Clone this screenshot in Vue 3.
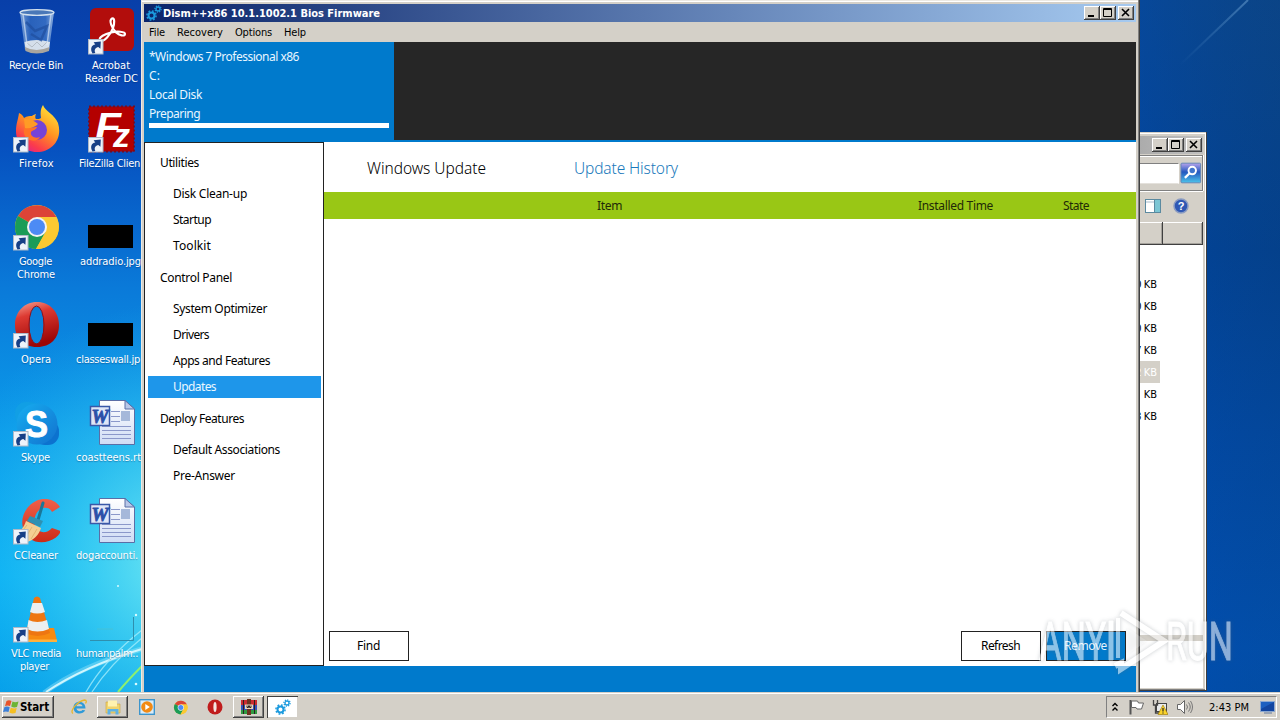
<script setup>
const vFit = {
  mounted(el, { value }) {
    if (!value) return
    const natural = el.getBoundingClientRect().width
    el.style.letterSpacing = (value - natural) / el.textContent.length + 'px'
  },
}

// Label lines: [text, width, left]
const shortcuts = [
  { icon: 'bin', lines: [['Recycle Bin', 54, 9]] },
  { icon: 'acrobat', link: true, lines: [['Acrobat', 38, 18], ['Reader DC', 53, 11]] },
  { icon: 'firefox', link: true, lines: [['Firefox', 35, 19]] },
  { icon: 'filezilla', link: true, lines: [['FileZilla Clien', 61, 5]] },
  { icon: 'chrome', link: true, lines: [['Google', 33, 19], ['Chrome', 38, 17]] },
  { icon: 'thumb', lines: [['addradio.jpg', 61, 6]] },
  { icon: 'opera', link: true, lines: [['Opera', 30, 21]] },
  { icon: 'thumb', lines: [['classeswall.jp', 64, 2]] },
  { icon: 'skype', link: true, lines: [['Skype', 29, 21]] },
  { icon: 'word', lines: [['coastteens.rt', 65, 2]] },
  { icon: 'ccleaner', link: true, lines: [['CCleaner', 44, 14]] },
  { icon: 'word', lines: [['dogaccounti.', 62, 2]] },
  { icon: 'vlc', link: true, lines: [['VLC media', 50, 11], ['player', 29, 20]] },
  { icon: 'glass', lines: [['humanpalm..', 62, 2]] },
]

const menu = [['File', 16, 12], ['Recovery', 46, 8], ['Options', 37, 3], ['Help', 22, 0]]

const info = [['*Windows 7 Professional x86', 150], ['C:', 11], ['Local Disk', 53], ['Preparing', 51]]

const nav = [
  { title: ['Utilities', 39], items: [['Disk Clean-up', 74], ['Startup', 38], ['Toolkit', 38]] },
  {
    title: ['Control Panel', 72],
    items: [['System Optimizer', 94], ['Drivers', 36], ['Apps and Features', 97], ['Updates', 43]],
  },
  { title: ['Deploy Features', 84], items: [['Default Associations', 107], ['Pre-Answer', 62]] },
]

const sizes = ['0 KB', '0 KB', '0 KB', '7 KB', '2 KB', 'KB', '3 KB']
</script>

<template>
  <div class="desktop">
    <svg class="defs" width="0" height="0">
      <defs>
        <linearGradient id="gFox" x1=".8" y1="0" x2=".2" y2="1">
          <stop offset="0" stop-color="#ffe83a" /><stop offset=".45" stop-color="#ff9422" />
          <stop offset=".8" stop-color="#fb3b4c" /><stop offset="1" stop-color="#e0218a" />
        </linearGradient>
        <linearGradient id="gOp" x1="0" y1="0" x2=".3" y2="1">
          <stop offset="0" stop-color="#f8a898" /><stop offset=".35" stop-color="#dd3a32" /><stop offset="1" stop-color="#9c0606" />
        </linearGradient>
        <linearGradient id="gSky" x1="0" y1="0" x2="1" y2="1">
          <stop offset="0" stop-color="#16aef0" /><stop offset="1" stop-color="#1272cf" />
        </linearGradient>
        <linearGradient id="gDoc" x1="0" y1="0" x2="0" y2="1">
          <stop offset="0" stop-color="#fff" /><stop offset="1" stop-color="#cfdcf5" />
        </linearGradient>
        <linearGradient id="gBin" x1="0" y1="0" x2="1" y2="0">
          <stop offset="0" stop-color="#a9c6e8" stop-opacity=".75" /><stop offset=".3" stop-color="#3f76c4" stop-opacity=".6" />
          <stop offset=".75" stop-color="#4f86d0" stop-opacity=".6" /><stop offset="1" stop-color="#bcd4ee" stop-opacity=".8" />
        </linearGradient>
        <linearGradient id="gCc" x1="0" y1="0" x2="0" y2="1">
          <stop offset="0" stop-color="#f0604a" /><stop offset="1" stop-color="#cc2a16" />
        </linearGradient>
      </defs>

      <symbol id="link" viewBox="0 0 16 16">
        <rect x=".5" y=".5" width="14.5" height="14.5" fill="#eef3fa" stroke="#aeb9c8" />
        <path d="M4.500 14.500C1.800 9.500 3.500 6 7.300 5.400L5.600 3.300 12.800 2.600 12.400 9.800 10.300 7.900C7.600 8.600 5.800 10.500 7.300 14Z" fill="#173f86" />
      </symbol>

      <symbol id="bin" viewBox="0 0 48 48">
        <path d="M8 5L13 43Q24 49 37 43L42 5Z" fill="url(#gBin)" />
        <path d="M12.500 35Q24 31 38 35L37 42Q24 48 13.500 42Z" fill="#e8ecef" opacity=".9" />
        <path d="M13 40Q24 46 37.500 40L37 44Q24 49 13.500 44Z" fill="#a9a59e" />
        <path d="M15 36l5 4 5-5 5 5 5-5" fill="none" stroke="#b5bdc6" />
        <path d="M14 15l9 9 12-5-6 14-10-6" fill="none" stroke="#1f4f9e" stroke-width="2.500" opacity=".7" />
        <path d="M11 7l4 31M39 7l-4 31" stroke="#e4eefa" stroke-width="1.500" opacity=".6" />
        <ellipse cx="25" cy="5.500" rx="17" ry="2.800" fill="#4a78b8" stroke="#d4e1ee" stroke-width="1.300" />
      </symbol>

      <symbol id="acrobat" viewBox="0 0 48 48">
        <rect x="3" y="1" width="44" height="43" rx="6" fill="#b20d0c" />
        <path d="M13 33c-1.500-3 5-6 11-7.500 6-1.500 14-1 14 1.500 0 3-6 1-9-1.500-4-4-7.500-12-4-14 3-1 2.500 5 1 9.500-2 6-9.500 15.500-13 12z" fill="none" stroke="#fff" stroke-width="2.200" />
      </symbol>

      <symbol id="firefox" viewBox="0 0 48 48">
        <path d="M4 26C4 19 6 15 7 8c3 1 4 3 5 5 3-2 6-2 8-2 1-1 3-2 4-2-1 2-1 4 0 5 2 0 4 0 5-1-1-6 0-10 2-13 2 6 12 10 15 18C51 34 40 47 25 47 12 47 4 38 4 26z" fill="url(#gFox)" />
        <circle cx="25" cy="25" r="10" fill="#7543d8" />
        <path d="M14 20c3 4 8 2 11 2-1 3-4 3-6 5-1 4 4 7 9 5-2 5-12 5-15-1-2-4-1-8 1-11z" fill="#ff7326" />
        <path d="M12 14c6-1 10 2 14 5-3 3-8 5-13 4z" fill="#ff9b25" />
      </symbol>

      <symbol id="filezilla" viewBox="0 0 48 48">
        <rect x="2" y="1.500" width="45" height="45" fill="#b40000" />
        <rect x="2" y="1.500" width="45" height="45" fill="none" stroke="#780c20" stroke-width="2" stroke-dasharray="2 2" />
        <g font-family="Liberation Sans, sans-serif" font-weight="bold" font-style="italic" fill="#fff">
          <text x="8" y="35" font-size="38" textLength="26" lengthAdjust="spacingAndGlyphs">F</text>
          <text x="26" y="42" font-size="34">z</text>
        </g>
      </symbol>

      <symbol id="chrome" viewBox="0 0 48 48">
        <circle cx="25" cy="24" r="22" fill="#fbc932" />
        <path d="M25 24L6 13A22 22 0 0 1 44.300 14H25z" fill="#dc4437" />
        <path d="M25 24L6 13A22 22 0 0 0 24 46L33.500 29z" fill="#1a9c58" />
        <path d="M25 14H44.300A22 22 0 0 1 24 46L33.700 29z" fill="#fbc932" />
        <circle cx="25" cy="24" r="10" fill="#f3f3f3" /><circle cx="25" cy="24" r="8" fill="#4c8bf5" />
      </symbol>

      <symbol id="opera" viewBox="0 0 48 48">
        <path fill-rule="evenodd" d="M25 1C12 1 3 11 3 24s8 22 22 22 22-9 22-22S38 1 25 1zM24.500 5.500c5 0 7 7 7 18s-2 19-7 19-7-8-7-19 2-18 7-18z" fill="url(#gOp)" />
        <ellipse cx="24.500" cy="24" rx="7.500" ry="19" fill="none" stroke="#8e1019" />
      </symbol>

      <symbol id="skype" viewBox="0 0 48 48">
        <rect x="3" y="3" width="25" height="25" rx="11" fill="#119fe5" /><rect x="22" y="21" width="25" height="25" rx="11" fill="#0c72cf" />
        <circle cx="25" cy="25" r="20.500" fill="url(#gSky)" />
        <text x="13" y="38" font-family="Liberation Sans, sans-serif" font-weight="bold" font-size="37" fill="#fff" stroke="#fff" textLength="23" lengthAdjust="spacingAndGlyphs">S</text>
      </symbol>

      <symbol id="thumb" viewBox="0 0 48 48">
        <rect x="1" y="22" width="45" height="23" fill="#000" />
      </symbol>

      <symbol id="glass" viewBox="0 0 48 48">
        <path d="M3 45.500H46.500V22" fill="none" stroke="#2f8fae" />
        <path d="M10 34h16" stroke="#4fc0cc" opacity=".7" />
      </symbol>

      <symbol id="word" viewBox="0 0 48 48">
        <path d="M12.500 1.500H38L47.500 10V45.500H12.500z" fill="url(#gDoc)" stroke="#5a6ea6" />
        <path d="M38 1.500V10H47.500z" fill="#b9c8e8" stroke="#5a6ea6" />
        <path d="M24 12.500h9M24 17.500h9M24 22.500h9M15 27.500h29M15 31.500h29M15 35.500h29M15 39.500h29" stroke="#8b98ca" />
        <rect x="34" y="12" width="9" height="10" fill="#a5b8da" />
        <rect x="3.500" y="7.500" width="19" height="19" fill="#dfe6f7" stroke="#3a58a8" stroke-width="1.500" />
        <text x="4.500" y="23.500" font-family="Liberation Serif, serif" font-weight="bold" font-style="italic" font-size="18" fill="#2b50a8" stroke="#2b50a8" stroke-width=".8" textLength="17" lengthAdjust="spacingAndGlyphs">W</text>
      </symbol>

      <symbol id="ccleaner" viewBox="0 0 48 48">
        <path d="M48 10C43 2 32 0 24 4 14 9 8 20 11 31c3 12 15 17 26 13 6-2 10-5 12-10l-9-3c-5 6-13 5-16 0-4-8 0-18 7-20 4-1 7 0 9 4z" fill="url(#gCc)" />
        <path d="M31 6l-5 17" stroke="#1a7798" stroke-width="3" stroke-linecap="round" />
        <path d="M18 19l13 5-3 6-13-6z" fill="#2f91b2" />
        <path d="M14 24l15 7c-2 7-8 13-15 14L3 37c6-3 9-7 11-13z" fill="#f5cf92" />
        <path d="M15 28l-7 9M20 30l-6 10M25 32l-6 10" stroke="#e3b672" />
      </symbol>

      <symbol id="vlc" viewBox="0 0 48 48">
        <path d="M11 33L9 46H45L42 33z" fill="#f78a10" /><path d="M9 44.500H45V47H9z" fill="#ffb13c" />
        <path d="M22 3Q25 0 28 3L38 38Q25 44 14 38z" fill="#ee7611" />
        <path d="M20.500 8h9.500l3 9Q25 20 18 17zM16.500 25Q25 29 35 25L37 34Q25 39 15 34z" fill="#eceff0" />
      </symbol>

      <symbol id="gears" viewBox="0 0 16 16">
        <g fill="none" stroke="#1b9ade">
          <circle cx="5.500" cy="10.500" r="3" stroke-width="2" /><circle cx="5.500" cy="10.500" r="4.600" stroke-width="1.500" stroke-dasharray="1.800 1.800" />
          <circle cx="12" cy="4" r="2" stroke-width="1.300" /><circle cx="12" cy="4" r="3.100" stroke-width="1.200" stroke-dasharray="1.200 1.200" />
        </g>
      </symbol>
      <symbol id="min" viewBox="0 0 16 14"><path d="M4 10h6" stroke="#000" stroke-width="2" /></symbol>
      <symbol id="max" viewBox="0 0 16 14"><path d="M3.500 2.500h8v8h-8zM3 3.500h9" fill="none" stroke="#000" /></symbol>
      <symbol id="close" viewBox="0 0 16 14"><path d="M4 3l7 7M11 3l-7 7" stroke="#000" stroke-width="1.600" /></symbol>
    </svg>

    <svg class="wallpaper" viewBox="0 0 1280 720">
      <defs>
        <linearGradient id="wl" x1="0" y1="0" x2="0" y2="1">
          <stop offset="0" stop-color="#083fa9" /><stop offset=".2" stop-color="#0650bf" /><stop offset=".4" stop-color="#0a7ad9" />
          <stop offset=".6" stop-color="#0b9bea" /><stop offset=".8" stop-color="#05aef5" /><stop offset="1" stop-color="#0299e6" />
        </linearGradient>
        <radialGradient id="glow" gradientUnits="userSpaceOnUse" cx="190" cy="560" r="260">
          <stop offset="0" stop-color="#8bf4f2" stop-opacity=".9" /><stop offset=".45" stop-color="#4fdcf2" stop-opacity=".55" /><stop offset="1" stop-color="#1fb4f0" stop-opacity="0" />
        </radialGradient>
        <linearGradient id="wr" x1="0" y1="0" x2="0" y2="1">
          <stop offset="0" stop-color="#0b4689" /><stop offset=".35" stop-color="#02418f" /><stop offset=".6" stop-color="#0149a3" />
          <stop offset=".9" stop-color="#0052b4" /><stop offset="1" stop-color="#0050ae" />
        </linearGradient>
        <linearGradient id="wr2" x1="0" y1="0" x2="1" y2="0">
          <stop offset="0" stop-color="#004cb8" stop-opacity=".4" /><stop offset="1" stop-color="#0a3f80" stop-opacity=".25" />
        </linearGradient>
        <linearGradient id="ray" gradientUnits="userSpaceOnUse" x1="1180" y1="65" x2="1248" y2="0">
          <stop offset="0" stop-color="#5590c8" stop-opacity="0" /><stop offset="1" stop-color="#6a9fd0" stop-opacity=".55" />
        </linearGradient>
      </defs>
      <rect width="150" height="720" fill="url(#wl)" /><rect width="150" height="720" fill="url(#glow)" />
      <rect x="1130" width="150" height="720" fill="url(#wr)" /><rect x="1130" width="150" height="720" fill="url(#wr2)" />
      <path d="M1180 65L1248 0" stroke="url(#ray)" stroke-width="2" />
      <g fill="none">
        <path d="M44 693Q80 666 142 649" stroke="#b5f0fc" stroke-width="5" opacity=".35" />
        <path d="M46 692Q85 666 142 649" stroke="#dcfbff" stroke-width="2" opacity=".9" />
        <path d="M86 692Q105 659 142 630M92 692Q110 664 142 638" stroke="#a3ecfb" stroke-width="1.300" opacity=".8" />
        <path d="M118 692Q128 680 142 666" stroke="#8df070" stroke-width="2" />
      </g>
      <g fill="#d8fbff"><circle cx="91" cy="560" r="1.500" /><circle cx="118" cy="586" r="1" /><circle cx="136" cy="615" r="1.200" /><circle cx="136" cy="684" r="1.300" /></g>
    </svg>

    <div class="shortcuts">
      <div v-for="(s, i) in shortcuts" :key="i" class="shortcut">
        <div class="pic">
          <svg width="48" height="48"><use :href="'#' + s.icon" /></svg>
          <svg v-if="s.link" class="arrow" width="16" height="16"><use href="#link" /></svg>
        </div>
        <div v-for="l in s.lines" :key="l[0]" class="line" :style="{ paddingLeft: l[2] + 'px' }"><span v-fit="l[1]">{{ l[0] }}</span></div>
      </div>
    </div>

    <section class="explorer">
      <div class="ex-title">
        <span class="pair"><i class="cap"><svg><use href="#min" /></svg></i><i class="cap"><svg><use href="#max" /></svg></i></span>
        <i class="cap"><svg><use href="#close" /></svg></i>
      </div>
      <div class="ex-search">
        <div class="field"></div>
        <svg class="go" width="22" height="22" viewBox="0 0 22 22">
          <defs><linearGradient id="gGo" x1="0" y1="0" x2="0" y2="1"><stop offset="0" stop-color="#b7a4ec" /><stop offset=".45" stop-color="#2458bf" /><stop offset="1" stop-color="#4cc4ea" /></linearGradient></defs>
          <rect x="1" y="1" width="20" height="20" rx="1" fill="url(#gGo)" stroke="#6386b8" />
          <circle cx="12.500" cy="8.500" r="3.800" fill="#3f74cc" stroke="#fff" stroke-width="2" /><path d="M9.500 11.500L5 16" stroke="#fff" stroke-width="2.400" />
        </svg>
      </div>
      <div class="ex-tools">
        <svg width="16" height="14" viewBox="0 0 16 14"><rect x=".5" y=".5" width="15" height="13" fill="#fff" stroke="#5b8aa0" /><path d="M1 3h9" stroke="#a9bccb" /><rect x="10" y="1" width="5" height="12" fill="#7cc6d4" /><path d="M9.500 1v12" stroke="#5b8aa0" /></svg>
        <svg width="16" height="16" viewBox="0 0 16 16"><circle cx="8" cy="8" r="7" fill="#2f58b4" stroke="#8b9cc2" stroke-width="1.500" /><text x="4.800" y="12" font-family="Liberation Sans, sans-serif" font-weight="bold" font-size="11" fill="#fff">?</text></svg>
      </div>
      <div class="ex-cols"><i></i><i></i></div>
      <div class="ex-list">
        <div v-for="(s, i) in sizes" :key="i" class="size" :class="{ picked: i === 4 }"><span>{{ s }}</span></div>
      </div>
      <div class="ex-details"></div>
    </section>

    <section class="dism">
      <header class="title">
        <svg width="16" height="16"><use href="#gears" /></svg>
        <b><span v-fit="217">Dism++x86 10.1.1002.1 Bios Firmware</span></b>
        <span class="pair"><i class="cap"><svg><use href="#min" /></svg></i><i class="cap"><svg><use href="#max" /></svg></i></span>
        <i class="cap"><svg><use href="#close" /></svg></i>
      </header>
      <nav class="menu"><span v-for="m in menu" :key="m[0]" v-fit="m[1]">{{ m[0] }}</span></nav>
      <div class="banner">
        <div class="image-info">
          <div v-for="l in info" :key="l[0]"><span v-fit="l[1]">{{ l[0] }}</span></div>
          <div class="progress"></div>
        </div>
      </div>
      <div class="body">
        <aside>
          <template v-for="g in nav" :key="g.title[0]">
            <h3><span v-fit="g.title[1]">{{ g.title[0] }}</span></h3>
            <div v-for="it in g.items" :key="it[0]" class="item" :class="{ active: it[0] === 'Updates' }"><span v-fit="it[1]">{{ it[0] }}</span></div>
          </template>
        </aside>
        <main>
          <div class="tabs"><span v-fit="119">Windows Update</span><span v-fit="104" class="on">Update History</span></div>
          <div class="thead"><div><span v-fit="25">Item</span></div><div><span v-fit="75">Installed Time</span></div><div><span v-fit="26">State</span></div></div>
          <div class="rows"></div>
          <div class="actions">
            <button><span v-fit="23">Find</span></button>
            <button class="refresh"><span v-fit="39">Refresh</span></button>
            <button class="primary"><span v-fit="43">Remove</span></button>
          </div>
        </main>
      </div>
    </section>

    <svg class="watermark" width="200" height="68" viewBox="0 0 200 68">
      <g fill="#fff" stroke="#fff" stroke-width="1" font-family="Roboto, sans-serif" font-size="53">
        <text x="4" y="52" textLength="67" lengthAdjust="spacingAndGlyphs">ANY</text>
        <text x="131" y="52" textLength="67" lengthAdjust="spacingAndGlyphs">RUN</text>
        <path d="M74 13h4v39h-4z" />
        <path d="M86 5L129 33 86 61V55L80 58" fill="none" stroke-width="6" />
        <path d="M83 50V10" fill="none" stroke-width="4" />
        <path d="M92 20l20 13-20 14z" fill-opacity=".4" stroke="none" />
      </g>
    </svg>

    <footer class="taskbar">
      <button class="start">
        <svg width="17" height="16" viewBox="0 0 17 16"><path d="M3.500 2Q6 .5 8.500 2L7 7Q5 6 2 7z" fill="#e8532a" /><path d="M9.500 2.500Q12 4 15.500 2.500L14 8Q11 9 8.200 7.500z" fill="#6db434" /><path d="M1.500 8Q4 6.800 6.700 8.200L5.500 13Q3 12 0 13z" fill="#3b7fd8" /><path d="M7.800 8.700Q11 10 13.700 9L12.500 14Q9 15 6.400 13.500z" fill="#f5bf22" /></svg>
        <b><span v-fit="29">Start</span></b>
      </button>
      <div class="tasks">
        <i><svg viewBox="0 0 16 16"><path d="M14.500 9.500H5.500C6 12.500 10 13 11.300 11L14.200 11.300C11.500 16.500 2.500 15.500 2.500 8.700 2.500 1 14.500 .5 14.500 9.500zM5.500 7.200h6C11 4.200 6 4.200 5.500 7.200z" fill="#2f9ad8" fill-rule="evenodd" /><path d="M2 14.500C-2 12 7 2 13.500 1c2.500 0 2 2 1 3.500" fill="none" stroke="#e8b62c" stroke-width="1.300" /></svg></i>
        <i class="raised"><svg viewBox="0 0 16 16"><path d="M1 3h5l1 2h8v9H1z" fill="#f1d46d" stroke="#c9a23c" stroke-width=".6" /><path d="M3 1.500h9v6H3z" fill="#fff2b0" /><path d="M2.500 10h11v5.500h-3V12.500h-5v3h-3z" fill="#5fb2e4" /></svg></i>
        <i><svg viewBox="0 0 16 16"><rect x=".7" y=".7" width="14.600" height="14.600" fill="#d9ecf8" stroke="#3c95cc" stroke-width="1.400" /><circle cx="8" cy="8" r="5.800" fill="#f28a14" /><path d="M6.300 5v6l4.500-3z" fill="#fff" /></svg></i>
        <i><svg viewBox="0 0 48 48" class="sm"><use href="#chrome" width="48" height="48" /></svg></i>
        <i><svg viewBox="0 0 16 16"><circle cx="8" cy="8" r="7.500" fill="#c01c1c" /><ellipse cx="8" cy="8" rx="1.600" ry="5" fill="#f5e4e0" /></svg></i>
        <i class="raised"><svg viewBox="0 0 16 16"><path d="M0 1h16v5H0z" fill="#c92b31" /><path d="M0 6h16v5H0z" fill="#3450b8" /><path d="M0 11h16v4H0z" fill="#2f9a42" /><path d="M6 0h4v16H6z" fill="#6e3220" /><path d="M4 5.500h8v4.500H4z" fill="#e9d7bd" /><path d="M6 6.500v2h1.500v-2M8.500 6.500v2H10v-2M2.500 1v14M13.500 1v14" fill="none" stroke="#2c2020" /></svg></i>
        <i class="pressed"><svg viewBox="0 0 16 16"><use href="#gears" width="16" height="16" /></svg></i>
      </div>
      <div class="tray">
        <svg width="8" height="10" viewBox="0 0 8 10"><path d="M1.500 4L4 1.500 6.500 4M1.500 8.500L4 6 6.500 8.500" fill="none" stroke="#000" stroke-width="1.400" /></svg>
        <svg class="flag" width="17" height="16" viewBox="0 0 17 16"><path d="M2.500 1v14.500" stroke="#555" stroke-width="2" /><path d="M3.500 2h6l1 2h5l-2 6H9L8 8.500H3.500z" fill="#fff" stroke="#666" /></svg>
        <svg class="net" width="16" height="16" viewBox="0 0 16 16"><rect x="4.500" y="4.500" width="10" height="8" fill="#e9ebec" stroke="#444" /><path d="M1.500 1v5h4V1M3.500 6v8h6" fill="none" stroke="#444" stroke-width="1.300" /><path d="M11 6l5 9.500H6z" fill="#fbd42b" stroke="#a58210" stroke-width=".7" /><path d="M11 9v3.500M11 13.500v1" stroke="#222" stroke-width="1.200" /></svg>
        <svg class="vol" width="17" height="16" viewBox="0 0 17 16"><path d="M1.500 5.500h3L8.500 1.500v13L4.500 10.500h-3z" fill="#fff" stroke="#666" /><path d="M10.500 5.500q2 2.500 0 5M12.500 3.500q3.500 4.500 0 9M14.500 2q4 6 0 12" fill="none" stroke="#777" /></svg>
        <span class="clock"><span v-fit="40">2:43 PM</span></span>
        <svg class="show" width="15" height="13" viewBox="0 0 15 13"><rect x=".5" y=".5" width="14" height="10" fill="#1c5fc0" stroke="#8ca8d0" /><path d="M1 8L14 1v9H1z" fill="#1245a0" /><path d="M4 12h8" stroke="#8796ac" stroke-width="1.500" /></svg>
      </div>
    </footer>
  </div>
</template>

<style>
body { overflow: hidden; }
</style>

<style scoped>
.desktop { position: relative; width: 1280px; height: 720px; overflow: hidden; font: 11px/13px "DejaVu Sans Condensed", "DejaVu Sans", sans-serif; color: #000; }
.desktop * { box-sizing: border-box; }
.defs { position: absolute; }
.wallpaper { position: absolute; inset: 0; width: 1280px; height: 720px; }
span { white-space: nowrap; }
button { font: inherit; padding: 0; }

.shortcuts { position: absolute; left: 0; top: 7px; display: grid; grid-template-columns: 74px 74px; grid-auto-rows: 98px; }
.pic { position: relative; width: 48px; height: 48px; margin: 0 0 4px 12px; }
.shortcut:nth-child(even) .pic { margin-left: 13px; }
.arrow { position: absolute; left: 1px; top: 32px; }
.line { color: #fff; height: 13px; text-shadow: 0 1px 1px rgba(0, 30, 80, .35); }
.pic svg { display: block; }
.line span, .menu span, .title b span, .image-info span, aside span, main span, .clock span { display: inline-block; }

.cap { display: flex; width: 16px; height: 14px; background: #d4d0c8; box-shadow: inset -1px -1px #404040, inset 1px 1px #fff, inset -2px -2px #808080; }
.cap svg { width: 16px; height: 14px; }
.pair { display: flex; }

.explorer { position: absolute; left: 1000px; top: 132px; width: 207px; height: 559px; padding: 4px 4px 3px; background: #d4d0c8; box-shadow: inset -1px -1px #404040, inset 0 1px #d4d0c8, inset -2px 2px #fff, inset -2px -2px #808080; display: flex; flex-direction: column; }
.ex-title { height: 18px; background: linear-gradient(90deg, #808080, #c0c0c0); display: flex; justify-content: flex-end; align-items: center; gap: 2px; padding-right: 1px; }
.ex-search { height: 36px; margin-top: 1px; border: 1px solid #808080; border-left: 0; box-shadow: inset 0 1px #fff, 0 1px #fff, 1px 0 #fff; display: flex; align-items: center; justify-content: flex-end; gap: 1px; }
.field { width: 179px; height: 21px; background: #fff; border: 1px solid #808080; border-right-color: #fff; border-bottom-color: #e4e1dc; }
.ex-tools { height: 31px; display: flex; align-items: center; justify-content: flex-end; gap: 12px; padding: 0 14px 2px 0; }
.ex-cols { height: 23px; display: flex; justify-content: flex-end; }
.ex-cols i { width: 40px; background: #d4d0c8; box-shadow: inset -1px -1px #404040, inset 0 1px #fff, inset -2px -2px #a5a29c; }
.ex-cols i:first-child { width: 159px; }
.ex-list { height: 390px; background: #fff; padding-top: 28px; }
.size { width: 156px; height: 22px; padding-right: 3px; display: flex; justify-content: flex-end; align-items: center; word-spacing: -1px; }
.picked { background: #d4d0c8; color: #fff; }
.ex-details { flex: 1; background: #fff; border-top: 6px solid #d4d0c8; }

.dism { position: absolute; left: 141px; top: 0; width: 999px; height: 700px; padding: 4px 4px 0 3px; background: #d4d0c8; box-shadow: inset -1px 0 #404040, inset -2px 0 #808080, inset 1px 1px #ece9e3, inset 0 2px #fff; }
.title { height: 18px; background: linear-gradient(90deg, #0a246a, #a6caf0); display: flex; align-items: center; padding: 0 2px 0 2px; color: #fff; }
.title b { margin-left: 1px; flex: 1; }
.title .pair { margin-right: 2px; }
.menu { height: 20px; display: flex; align-items: center; gap: 12px; padding-left: 5px; }
.banner { height: 98px; background: #262626; }
.image-info { width: 250px; height: 98px; background: #007acc; color: #e9f6ff; padding: 5px 5px 0; font: 12px/19px "Noto Sans", sans-serif; }
.image-info > div { height: 19px; }
.image-info > .progress { height: 5px; background: #fff; }
.body { height: 560px; border-top: 2px solid #007acc; border-bottom: 34px solid #007acc; display: flex; background: #fff; font: 12px/20px "Noto Sans", sans-serif; }
aside { width: 180px; border: 1px solid #222; padding: 1px 2px 0 3px; display: flex; flex-direction: column; }
h3 { margin: 0; height: 37px; padding-left: 12px; font: inherit; line-height: 38px; }
.item { height: 22px; margin: 2px 0; line-height: 22px; padding-left: 25px; }
.active { background: #1e96ea; color: #eaf7ff; }
main { flex: 1; display: flex; flex-direction: column; }
.tabs { height: 50px; padding: 1px 0 0 43px; display: flex; align-items: center; gap: 88px; font-size: 15.5px; font-weight: 300; }
.on { color: #1979bb; }
.thead { height: 27px; background: #99c715; color: #1f2a08; display: grid; grid-template-columns: 571px 121px 120px; line-height: 27px; text-align: center; }
.rows { flex: 1; }
.actions { display: flex; padding: 0 10px 5px 5px; }
.actions button { width: 80px; height: 30px; border: 1px solid #222; background: #fff; color: #000; padding-right: 1px; }
.actions .refresh { margin: 0 5px 0 auto; }
.actions .primary { background: #007acc; color: #e8f6ff; }

.watermark { position: absolute; left: 1035px; top: 608px; opacity: .55; filter: drop-shadow(0 0 2px rgba(90, 100, 110, .6)); }

.taskbar { position: absolute; left: 0; right: 0; bottom: 0; height: 28px; background: #d4d0c8; border-top: 1px solid #d4d0c8; box-shadow: inset 0 1px #fff; padding: 3px 3px 2px 2px; display: flex; }
.start { width: 52px; height: 22px; background: #d4d0c8; border: 0; box-shadow: inset -1px -1px #404040, inset 1px 1px #fff, inset -2px -2px #808080; display: flex; align-items: center; padding-left: 1px; color: #000; font-size: 11.5px; }
.tasks { display: flex; gap: 3px; margin-left: 9px; }
.tasks i { width: 31px; height: 22px; display: flex; align-items: center; justify-content: center; }
.tasks svg { width: 16px; height: 16px; }
.raised { box-shadow: inset -1px -1px #404040, inset 1px 1px #fff, inset -2px -2px #808080; }
.pressed { background: #fff; box-shadow: inset 1px 1px #404040, inset -1px -1px #d4d0c8; }
.tasks .sm { width: 15px; height: 15px; }
.tray { margin-left: auto; width: 171px; height: 22px; border: 1px solid; border-color: #808080 #fff #fff #808080; display: flex; align-items: center; padding-left: 4px; }
.flag { margin-left: 9px; }
.net { margin-left: 7px; }
.vol { margin-left: 8px; }
.clock { margin-left: 16px; width: 43px; }
.show { margin-left: 8px; }
</style>
